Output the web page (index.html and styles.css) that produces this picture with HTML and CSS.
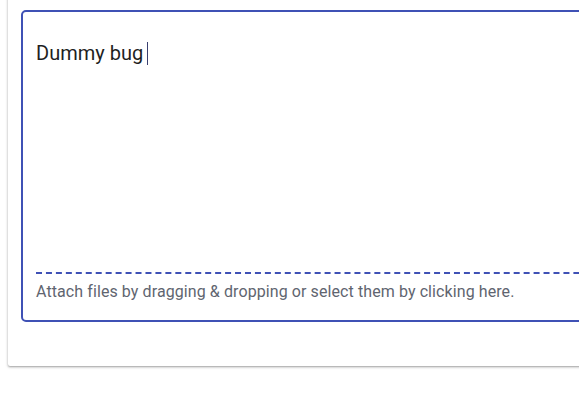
FILE: index.html
```html
<!DOCTYPE html>
<html>
<head>
<meta charset="utf-8">
<link rel="stylesheet" href="styles.css">
</head>
<body>
<div class="card">
  <div class="editor">
    <div class="text-area">
      <span class="text">Dummy bug</span><span class="caret"></span>
    </div>
    <div class="dropzone">Attach files by dragging &amp; dropping or select them by clicking here.</div>
  </div>
</div>
</body>
</html>
```
FILE: styles.css
```css
html, body {
  margin: 0;
  padding: 0;
  background: #fff;
  overflow: hidden;
  width: 579px;
  height: 405px;
}
body {
  font-family: Roboto, "Liberation Sans", sans-serif;
}
.card {
  margin-left: 8px;
  margin-top: -10px;
  width: 640px;
  padding: 20px 0 44px 13px;
  background: #fff;
  border-radius: 2px;
  box-shadow: 0 1px 2px rgba(0,0,0,0.3), 0 1px 3px 1px rgba(0,0,0,0.08);
}
.editor {
  border: 2px solid #3f51b5;
  border-radius: 5px;
  padding: 0 0 0 13px;
}
.text-area {
  height: 260px;
  padding-top: 27px;
  box-sizing: border-box;
  display: flex;
  align-items: flex-start;
  font-size: 20px;
  line-height: 28px;
  color: #1f1f1f;
}
.caret {
  display: inline-block;
  width: 1px;
  height: 23px;
  background: #3a4070;
  margin-left: 4px;
  margin-top: 3px;
}
.dropzone {
  border-top: 2px dashed #3f51b5;
  padding: 6px 0 16px;
  font-size: 16px;
  line-height: 24px;
  letter-spacing: 0.09px;
  color: #5f6570;
}
```
